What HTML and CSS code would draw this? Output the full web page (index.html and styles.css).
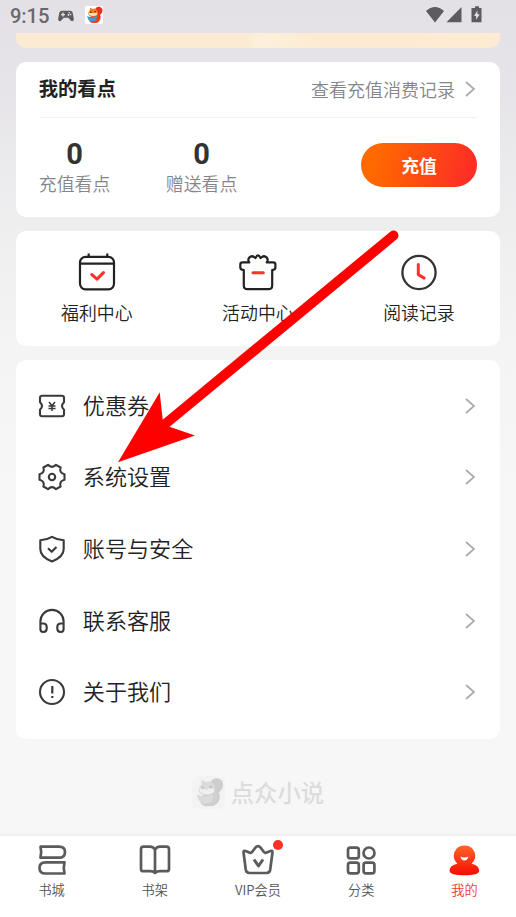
FILE: index.html
```html
<!DOCTYPE html>
<html lang="zh-CN">
<head>
<meta charset="utf-8">
<title>我的</title>
<link rel="stylesheet" href="styles.css">
</head>
<body>
<svg class="defs" width="0" height="0" aria-hidden="true">
  <symbol id="chevron" viewBox="0 0 12 18"><path d="M2 2l8 7-8 7" fill="none" stroke="currentColor" stroke-width="1.7"/></symbol>
  <symbol id="squirrel" viewBox="0 0 36 36">
    <path class="sq-tail" d="M20 8C21 1 30-1 34 5C37 12 32 16 30 18C33 24 30 33 21 34L17 27Z"/>
    <path class="sq-body" d="M14 18L27 17C31 25 27 34 18 34C11 35 8 31 8 25Z"/>
    <path class="sq-head" d="M7 13L10 8L10 3L15 6C18 4 20 5 22 6L25 10C27 15 25 21 17 21C10 22 5 18 7 13Z"/>
    <path class="sq-face" d="M7 15C10 12 13 13 16 15C20 12 24 13 25 16C23 21 10 22 7 15Z"/>
    <circle class="sq-eye" cx="11.5" cy="12.5" r="1.7"/><circle class="sq-eye" cx="20.5" cy="11.5" r="1.7"/>
    <path class="sq-book" d="M4 20L13 23L24 20L22 29L13 31L7 28Z"/>
  </symbol>
</svg>
<div class="phone">
  <header class="status">
    <span class="time">9:15</span>
    <svg class="pad" viewBox="0 0 16 12"><path d="M3.8.8h8.4q2 0 2.500 2l1.100 6q.2 2.400-1.500 2.400-1 0-1.800-1L10.300 7.800H5.700L3.500 10.200q-.8 1-1.800 1Q0 11.200.2 8.800l1.100-6q.5-2 2.500-2z" fill="#5c5b5e"/><path d="M5 2.600v4M3 4.600h4" stroke="#e4e2e5" stroke-width="1.300"/><circle cx="10.500" cy="5" r=".9" fill="#e4e2e5"/><circle cx="12.600" cy="4.500" r=".8" fill="#e4e2e5"/><circle cx="11.200" cy="2.800" r=".8" fill="#e4e2e5"/></svg>
    <span class="appicon"><svg viewBox="0 0 36 36"><use href="#squirrel"/></svg></span>
    <svg class="sys" viewBox="0 0 56 18"><path d="M0 5Q9-3 18 5L9 16.500zM20.500 16.200L35.500 1v15.200zM46.500 2h2.500V.200h4V2h2.500v14.300h-10V2z" fill="#5c5b5e"/><path d="M51.400 4.500l-3.300 5.400h2v3.800l3.600-5.500h-2.300z" fill="#e4e2e5"/></svg>
  </header>
  <div class="banner"></div>

  <main>
    <section class="card wallet">
      <div class="wallet-head"><h2>我的看点</h2><a class="more">查看充值消费记录<svg class="chev"><use href="#chevron"/></svg></a></div>
      <div class="wallet-body">
        <div class="stat"><b>0</b><span>充值看点</span></div>
        <div class="stat"><b>0</b><span>赠送看点</span></div>
        <button class="recharge">充值</button>
      </div>
    </section>

    <section class="card shortcuts">
      <div class="shortcut">
        <svg viewBox="0 0 40 40"><g fill="none" stroke="#222" stroke-width="2.200"><rect x="3" y="4.800" width="34" height="32.500" rx="5.500"/><path d="M3 11.700h34M11.700 5V1.500M30.300 5V1.500"/></g><path class="red" d="M14.700 22.500l5.300 4.600 6.500-6.500"/></svg>
        <span>福利中心</span>
      </div>
      <div class="shortcut">
        <svg viewBox="0 0 40 40"><path d="M5.800 18.200q-3.500-.6-3.500-2.800v-2.800q0-2.200 2.200-2.200h6.800q-2-2.800.2-5t4.800-.2l1.200.8q2.500-5.400 5 0l1.200-.8q2.600-2 4.800.2t.2 5h6.500q2.200 0 2.200 2.200v2.800q0 2.200-3.200 2.800V33.500q0 3.700-3.700 3.700h-21q-3.700 0-3.700-3.700z" fill="none" stroke="#222" stroke-width="2.200" stroke-linejoin="round"/><path class="red" d="M15 20.700h10.300"/></svg>
        <span>活动中心</span>
      </div>
      <div class="shortcut">
        <svg viewBox="0 0 40 40"><circle cx="20" cy="20.500" r="16.600" fill="none" stroke="#333" stroke-width="2.300"/><path class="red" d="M19.300 12.400v10.200l5.900 3.500"/></svg>
        <span>阅读记录</span>
      </div>
    </section>

    <section class="card menu">
      <div class="row"><svg class="ico" viewBox="0 0 28 28"><path d="M4 3.700h20q2 0 2 2v4.500q-4 3.800 0 7.600V22.300q0 2-2 2H4q-2 0-2-2v-4.500q4-3.800 0-7.600V5.700q0-2 2-2z"/><path d="M11 10l3 3.700 3-3.700M10.500 14h7M10.500 16.500h7M14 13.700V19" stroke-width="1.500"/></svg><span>优惠券</span><svg class="chev"><use href="#chevron"/></svg></div>
      <div class="row"><svg class="ico gear" viewBox="0 0 28 28"><path d="M18 1.800L22.600 4.500Q20.800 9.800 26.500 11.300V16.700Q20.800 18.200 22.600 23.500L18 26.200Q14 22 10 26.200L5.400 23.500Q7.200 18.200 1.500 16.700V11.300Q7.200 9.800 5.400 4.500L10 1.800Q14 6 18 1.800Z"/><circle cx="14" cy="14" r="3.200"/></svg><span>系统设置</span><svg class="chev"><use href="#chevron"/></svg></div>
      <div class="row"><svg class="ico" viewBox="0 0 28 28"><path d="M14 1.900q5 3 11.700 3.300V14q0 8-11.700 12.400Q2.300 22 2.300 14V5.200Q9 4.900 14 1.900z"/><path d="M10 13.300l3.700 3.500 4.800-4.700"/></svg><span>账号与安全</span><svg class="chev"><use href="#chevron"/></svg></div>
      <div class="row"><svg class="ico" viewBox="0 0 28 28"><path d="M2.400 22V14.500a11.600 11.600 0 0 1 23.200 0V22M2.400 16.500h2.800q3.500 0 3.500 3.500v1.500q0 3.500-3.500 3.500-2.800 0-2.800-3zM25.600 16.500h-2.800q-3.500 0-3.500 3.500v1.500q0 3.500 3.500 3.500 2.800 0 2.800-3z"/></svg><span>联系客服</span><svg class="chev"><use href="#chevron"/></svg></div>
      <div class="row"><svg class="ico" viewBox="0 0 28 28"><circle cx="14" cy="14" r="12"/><path d="M14.300 8v7.500M14.300 18v2" stroke-width="2.200"/></svg><span>关于我们</span><svg class="chev"><use href="#chevron"/></svg></div>
    </section>

    <div class="brand"><span class="brandicon"><svg viewBox="0 0 36 36"><use href="#squirrel"/></svg></span><span>点众小说</span></div>
  </main>

  <nav class="tabs">
    <div class="tab"><svg viewBox="0 0 34 34"><path d="M5.500 3.700h18.500q6 0 6 5.500t-6 5.500H5.500q1.400-5.500 0-11zM29.500 19.300H10.500Q4.500 19.300 4.500 24.900t6 5.600h19q-1.500-5.600 0-11.200z"/></svg><span>书城</span></div>
    <div class="tab"><svg viewBox="0 0 34 34"><path d="M17 6.600Q15 3.700 12 3.700H5.500Q3 3.700 3 6.200v19.700q0 2.300 2.500 2.300H12q3 0 5 1.700 2-1.700 5-1.700h6.500q2.500 0 2.500-2.300V6.200q0-2.500-2.500-2.500H22q-3 0-5 2.900zM17 6.600v23"/></svg><span>书架</span></div>
    <div class="tab"><svg viewBox="0 0 34 34"><path d="M2.500 9.300q0-2 2-1.300l4.500 1.800q1.200.5 2-.7L14.700 4.300q2.300-2.400 4.600 0L23 9.100q.8 1.200 2 .7l4.500-1.800q2-.7 2 1.300l-2.300 17.500q-.5 3.200-3.700 3.200h-17q-3.200 0-3.700-3.200z"/><path d="M13 16.500l4.500 6.500 4.500-6.500" stroke-width="3"/></svg><i class="dot"></i><span>VIP会员</span></div>
    <div class="tab"><svg viewBox="0 0 34 34"><rect x="4" y="4.600" width="10.800" height="10.800" rx="2.300"/><circle cx="25" cy="10" r="5.500"/><rect x="4" y="19.600" width="10.800" height="10.800" rx="2.300"/><rect x="19.600" y="19.600" width="10.800" height="10.800" rx="2.300"/></svg><span>分类</span></div>
    <div class="tab active"><svg viewBox="0 0 34 34"><defs><linearGradient id="me" x1="0" y1="0" x2="0" y2="1"><stop offset="0" stop-color="#ff652b"/><stop offset="1" stop-color="#f50c00"/></linearGradient></defs><path class="solid" d="M17.500 2.500a10.300 10.300 0 0 1 7 18.200q7.700 1.500 7.700 7 0 4.500-14.700 4.500t-15-4.500q0-5.500 8-7A10.300 10.300 0 0 1 17.500 2.500z"/><path class="smile" d="M13.500 13.500q3.900 2 7.800 0-.7 4-3.900 4t-3.900-4z"/></svg><span>我的</span></div>
  </nav>

  <svg class="arrow" viewBox="0 0 516 917"><path d="M393.500 235.500L164 425" stroke="#f00" stroke-width="10" stroke-linecap="round"/><path d="M118 462.300L159.700 392.300 162.700 419.500 169.500 426.800 195 435.400z" fill="#f00"/></svg>
</div>
</body>
</html>
```

FILE: styles.css
```css
* { box-sizing: border-box; }
body { margin: 0; font-family: "Noto Sans CJK SC", sans-serif; font-weight: 350; color: #222; }
h2, button { margin: 0; font: inherit; }
svg { display: block; flex: none; }
.defs { position: absolute; }
.phone {
  position: relative;
  display: flex;
  flex-direction: column;
  width: 516px;
  height: 917px;
  overflow: hidden;
  background: linear-gradient(#e3e1e5 0, #e6e4e8 90px, #eeeeef 220px, #f4f4f4 350px, #f7f7f7 500px);
}

.status { display: flex; align-items: center; height: 33px; padding: 0 34px 0 10px; flex: none; }
.time { width: 48px; font: 500 20.200px/33px Roboto, sans-serif; color: #69686c; letter-spacing: -.1px; }
.pad { width: 16px; height: 12px; margin-top: -2px; }
.appicon { width: 18px; height: 18px; margin: -3px 0 0 11px; border-radius: 2px; background: #fff; }
.appicon svg { width: 18px; height: 18px; }
.sys { width: 56px; height: 18px; margin: -3px 0 0 auto; }
.sq-tail { fill: #e8301c; }
.sq-body { fill: #ef3d16; }
.sq-head { fill: #f77b20; }
.sq-face { fill: #ffe3b4; }
.sq-eye { fill: #5b2710; }
.sq-book { fill: #3b9bd9; }

.banner {
  flex: none;
  height: 15px;
  margin: 0 16px;
  border-radius: 0 0 10px 10px;
  background: linear-gradient(100deg, #faebd2 48%, #fdf0da 50%, #fcebd0 64%, #feebd3);
}
main { flex: 1; padding: 13.500px 16.500px 0 16.300px; }
.card { background: #fff; border-radius: 10px; }

.wallet { height: 155.500px; margin-bottom: 14px; padding: 0 22.500px; }
.wallet-head { display: flex; justify-content: space-between; align-items: center; height: 56.500px; border-bottom: 1px solid #f2f2f2; }
.wallet-head h2 { font-size: 19.300px; font-weight: 700; line-height: 28px; margin-top: -2px; }
.more { display: flex; align-items: center; gap: 8.500px; margin-right: 1.500px; font-size: 18px; line-height: 26px; color: #85858a; }
.chev { width: 12px; height: 18px; color: #aaa; }
.wallet-body { display: flex; align-items: flex-start; padding-top: 19px; }
.stat { display: flex; flex-direction: column; align-items: center; width: 71.500px; margin-right: 55.500px; }
.stat b { font: 700 29px/34px Roboto, sans-serif; color: #333; }
.stat span { margin-top: -1px; font-size: 17.900px; line-height: 26px; color: #85858a; white-space: nowrap; }
.recharge {
  width: 116px;
  height: 44px;
  margin: 6px 0 0 auto;
  padding: 0;
  border: 0;
  border-radius: 22px;
  background: linear-gradient(105deg, #ff6900 15%, #fd2f25 90%);
  color: #fff;
  font-size: 17.800px;
  font-weight: 700;
}

.shortcuts { display: flex; height: 115px; margin-bottom: 14px; padding-top: 21px; }
.shortcut { flex: 1; display: flex; flex-direction: column; align-items: center; }
.shortcut svg { width: 40px; height: 40px; }
.shortcut span { margin-top: 7px; font-size: 17.900px; line-height: 26px; }
.red { fill: none; stroke: #ff3128; stroke-width: 3; stroke-linecap: round; stroke-linejoin: round; }

.menu { height: 379px; padding: 10px 22.500px 0; }
.row { display: flex; align-items: center; height: 71.650px; }
.row span { flex: 1; margin: -4px 0 0 17px; font-size: 22.100px; line-height: 32px; }
.row .chev { margin-right: 1.500px; }
.ico { width: 28px; height: 28px; margin-left: -1px; fill: none; stroke: #3a3a3a; stroke-width: 2.100; stroke-linejoin: round; }

.brand { display: flex; align-items: center; justify-content: center; gap: 6px; margin-top: 36px; font-size: 23.300px; line-height: 34px; font-weight: 500; color: #dcdcdc; }
.brandicon { width: 33px; height: 33px; padding: 1px; border-radius: 6px; background: #f3f3f3; }
.brandicon svg { width: 31px; height: 31px; filter: grayscale(1); opacity: .23; }

.tabs { display: flex; flex: none; height: 81px; background: #fff; box-shadow: 0 -1px 3px rgba(0, 0, 0, .07); }
.tab { position: relative; flex: 1; display: flex; flex-direction: column; align-items: center; padding-top: 7px; font-size: 13.200px; line-height: 20px; color: #555; }
.tab svg { width: 34px; height: 34px; fill: none; stroke: #5b5b5b; stroke-width: 2.700; stroke-linejoin: round; }
.tab span { margin-top: 3px; }
.dot { position: absolute; left: 67px; top: 4px; width: 10px; height: 10px; border-radius: 50%; background: #ff3026; }
.tab.active { color: #f5382e; }
.tab .solid { fill: url(#me); stroke: none; }
.tab .smile { fill: #fff; stroke: none; }
.arrow { position: absolute; inset: 0; width: 516px; height: 917px; pointer-events: none; }
```
